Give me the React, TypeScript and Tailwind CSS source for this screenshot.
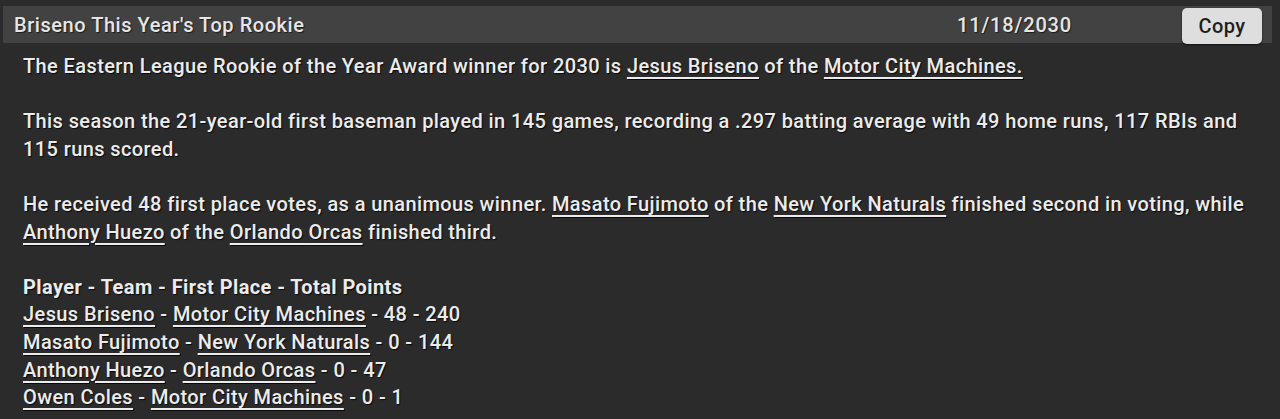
import React from 'react'

const Link = ({ children }: { children: React.ReactNode }) => (
  <span className="underline decoration-[1.5px] underline-offset-[4px]">{children}</span>
)

const standings = [
  { player: 'Jesus Briseno', team: 'Motor City Machines', first: 48, points: 240 },
  { player: 'Masato Fujimoto', team: 'New York Naturals', first: 0, points: 144 },
  { player: 'Anthony Huezo', team: 'Orlando Orcas', first: 0, points: 47 },
  { player: 'Owen Coles', team: 'Motor City Machines', first: 0, points: 1 },
]

const App = () => {
  return (
    <div
      className="w-[1280px] h-[419px] overflow-hidden bg-[#2b2b2b] text-[#ececec] pt-[6px] tracking-[0.4px]"
      style={{ fontFamily: 'Roboto, "Liberation Sans", sans-serif' }}
    >
      <div className="ml-[3px] w-[1269px] h-[37px] bg-[#424242] flex items-center">
        <div className="pl-[11px] flex-1 text-[20px] font-medium tracking-[0.55px] text-[#e6e6e6] [text-shadow:1px_1px_1px_rgba(0,0,0,0.6)]">
          Briseno This Year's Top Rookie
        </div>
        <div className="w-[125px] text-[20px] font-medium tracking-[0.85px] text-[#e6e6e6] [text-shadow:1px_1px_1px_rgba(0,0,0,0.6)]">
          11/18/2030
        </div>
        <div className="w-[100px]" />
        <button className="mt-[3px] w-[80px] h-[36px] rounded-[5px] bg-[#dedede] text-[#1e1e1e] text-[20px] font-medium tracking-[0.4px] shadow-[0_1px_2px_rgba(0,0,0,0.6)]">
          Copy
        </button>
        <div className="w-[10px]" />
      </div>
      <div className="pl-[23px] pr-[28px] pt-[10px] text-[20px] font-medium leading-[27.6px] [text-shadow:1px_1px_1px_rgba(0,0,0,0.8)]">
        <p>
          The Eastern League Rookie of the Year Award winner for 2030 is <Link>Jesus Briseno</Link> of the{' '}
          <Link>Motor City Machines.</Link>
        </p>
        <br />
        <p>
          This season the 21-year-old first baseman played in 145 games, recording a .297 batting average with 49 home
          runs, 117 RBIs and 115 runs scored.
        </p>
        <br />
        <p>
          He received 48 first place votes, as a unanimous winner. <Link>Masato Fujimoto</Link> of the{' '}
          <Link>New York Naturals</Link> finished second in voting, while <Link>Anthony Huezo</Link> of the{' '}
          <Link>Orlando Orcas</Link> finished third.
        </p>
        <br />
        <p className="font-bold">Player - Team - First Place - Total Points</p>
        {standings.map((s) => (
          <p key={s.player}>
            <Link>{s.player}</Link> - <Link>{s.team}</Link> - {s.first} - {s.points}
          </p>
        ))}
      </div>
    </div>
  )
}

export default App
